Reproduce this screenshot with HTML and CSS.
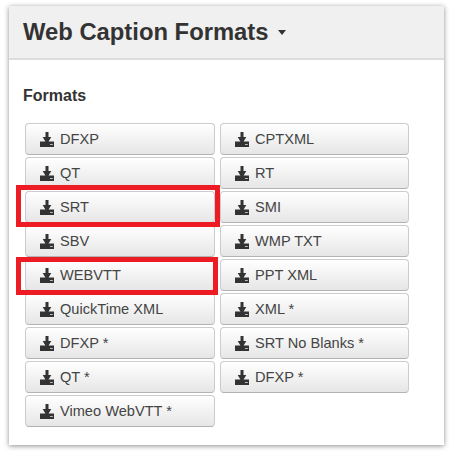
FILE: index.html

```html
<!DOCTYPE html>
<html lang="en">
<head>
  <meta charset="UTF-8">
  <title>Web Caption Formats</title>
  <link rel="stylesheet" href="styles.css">
</head>
<body>
  <svg width="0" height="0" class="defs">
    <symbol id="dl" viewBox="0 0 14 15">
      <path fill-rule="evenodd" d="M5.500 0h3v5h2.800L8.600 9.500H14V15H0V9.500h5.400L2.700 5h2.800zM10 12.200v.9h2.800v-.9z"/>
    </symbol>
  </svg>
  <div class="panel">
    <div class="panel-head">
      <h1>Web Caption Formats</h1>
      <span class="caret"></span>
    </div>
    <div class="panel-body">
      <h2>Formats</h2>
      <div class="formats">
        <a class="btn"><svg class="ico"><use href="#dl"/></svg>DFXP</a>
        <a class="btn"><svg class="ico"><use href="#dl"/></svg>CPTXML</a>
        <a class="btn"><svg class="ico"><use href="#dl"/></svg>QT</a>
        <a class="btn"><svg class="ico"><use href="#dl"/></svg>RT</a>
        <a class="btn marked"><svg class="ico"><use href="#dl"/></svg>SRT</a>
        <a class="btn"><svg class="ico"><use href="#dl"/></svg>SMI</a>
        <a class="btn"><svg class="ico"><use href="#dl"/></svg>SBV</a>
        <a class="btn"><svg class="ico"><use href="#dl"/></svg>WMP TXT</a>
        <a class="btn marked marked-low"><svg class="ico"><use href="#dl"/></svg>WEBVTT</a>
        <a class="btn"><svg class="ico"><use href="#dl"/></svg>PPT XML</a>
        <a class="btn"><svg class="ico"><use href="#dl"/></svg>QuickTime XML</a>
        <a class="btn"><svg class="ico"><use href="#dl"/></svg>XML *</a>
        <a class="btn"><svg class="ico"><use href="#dl"/></svg>DFXP *</a>
        <a class="btn"><svg class="ico"><use href="#dl"/></svg>SRT No Blanks *</a>
        <a class="btn"><svg class="ico"><use href="#dl"/></svg>QT *</a>
        <a class="btn"><svg class="ico"><use href="#dl"/></svg>DFXP *</a>
        <a class="btn"><svg class="ico"><use href="#dl"/></svg>Vimeo WebVTT *</a>
      </div>
    </div>
  </div>
</body>
</html>
```

FILE: styles.css

```css
html, body {
  margin: 0;
  padding: 0;
  background: #fff;
}
body {
  padding: 6px 6px 6px 9px;
  height: 451px;
  box-sizing: border-box;
  overflow: hidden;
  font-family: "Liberation Sans", Arial, sans-serif;
  color: #333;
}
.defs {
  position: absolute;
}
.panel {
  width: 435px;
  height: 439px;
  background: #fff;
  box-shadow: 0 1px 5px rgba(0, 0, 0, 0.45);
}
.panel-head {
  display: flex;
  align-items: center;
  gap: 10px;
  height: 52px;
  padding-left: 14px;
  background: #f0f0f0;
  border-bottom: 2px solid #ddd;
}
h1 {
  margin: 0;
  font-size: 23.8px;
  line-height: 52px;
  font-weight: bold;
}
.caret {
  width: 0;
  height: 0;
  margin-top: 1px;
  border-top: 5px solid #333;
  border-left: 4px solid transparent;
  border-right: 4px solid transparent;
}
.panel-body {
  padding: 26px 0 0 14px;
}
h2 {
  margin: 0 0 17px;
  font-size: 16px;
  line-height: 20px;
  font-weight: bold;
}
.formats {
  display: grid;
  grid-template-columns: 190px 189px;
  grid-auto-rows: 32px;
  gap: 2px 5px;
  margin-left: 2px;
}
.btn {
  display: flex;
  align-items: center;
  gap: 6px;
  box-sizing: border-box;
  padding-left: 14px;
  font-size: 14.6px;
  color: #444;
  background: linear-gradient(to bottom, #fff, #e6e6e6);
  border: 1px solid #ccc;
  border-bottom-color: #b3b3b3;
  border-radius: 4px;
}
.ico {
  width: 14px;
  height: 15px;
  fill: #333;
  flex: none;
}
.marked {
  position: relative;
}
.marked::after {
  content: "";
  position: absolute;
  left: -10px;
  right: -6px;
  top: -7px;
  bottom: -5px;
  border: 5px solid #ed1c24;
}
.marked-low::after {
  right: -4px;
  top: -3px;
}
```
